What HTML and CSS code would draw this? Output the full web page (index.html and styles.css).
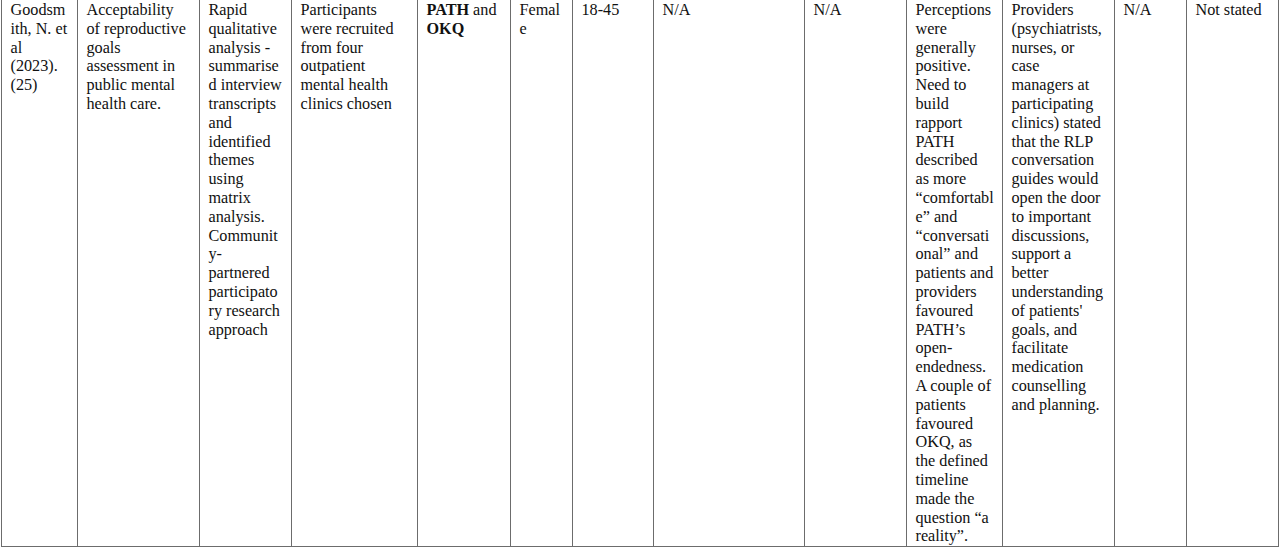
FILE: index.html
```html
<!DOCTYPE html>
<html lang="en">
<head>
<meta charset="utf-8">
<title>Study table</title>
<link rel="stylesheet" href="styles.css">
</head>
<body>
<div class="table" role="table">
  <div class="row" role="row">
    <div class="cell" role="cell">Goodsm<br>ith, N. et<br>al<br>(2023).<br>(25)</div>
    <div class="cell" role="cell">Acceptability<br>of reproductive<br>goals<br>assessment in<br>public mental<br>health care.</div>
    <div class="cell" role="cell">Rapid<br>qualitative<br>analysis -<br>summarise<br>d interview<br>transcripts<br>and<br>identified<br>themes<br>using<br>matrix<br>analysis.<br>Communit<br>y-<br>partnered<br>participato<br>ry research<br>approach</div>
    <div class="cell" role="cell">Participants<br>were recruited<br>from four<br>outpatient<br>mental health<br>clinics chosen</div>
    <div class="cell" role="cell"><b>PATH</b> and<br><b>OKQ</b></div>
    <div class="cell" role="cell">Femal<br>e</div>
    <div class="cell" role="cell">18-45</div>
    <div class="cell" role="cell">N/A</div>
    <div class="cell" role="cell">N/A</div>
    <div class="cell" role="cell">Perceptions<br>were<br>generally<br>positive.<br>Need to<br>build<br>rapport<br>PATH<br>described<br>as more<br>“comfortabl<br>e” and<br>“conversati<br>onal” and<br>patients and<br>providers<br>favoured<br>PATH’s<br>open-<br>endedness.<br>A couple of<br>patients<br>favoured<br>OKQ, as<br>the defined<br>timeline<br>made the<br>question “a<br>reality”.</div>
    <div class="cell" role="cell">Providers<br>(psychiatrists,<br>nurses, or<br>case<br>managers at<br>participating<br>clinics) stated<br>that the RLP<br>conversation<br>guides would<br>open the door<br>to important<br>discussions,<br>support a<br>better<br>understanding<br>of patients'<br>goals, and<br>facilitate<br>medication<br>counselling<br>and planning.</div>
    <div class="cell" role="cell">N/A</div>
    <div class="cell cell-last" role="cell">Not stated</div>
  </div>
</div>
</body>
</html>
```
FILE: styles.css
```css
html, body {
  margin: 0;
  padding: 0;
  background: #ffffff;
}

body {
  font-family: "Liberation Serif", "Times New Roman", serif;
  font-size: 16.2px;
  line-height: 18.8px;
  color: #111111;
}

.table {
  margin-left: 1px;
  width: 1278px;
}

.row {
  display: grid;
  grid-template-columns: 76px 122px 92px 126px 93px 62px 81px 151px 102px 96px 112px 72px 93px;
}

.cell {
  box-sizing: border-box;
  border-left: 1px solid #6c6c6c;
  border-bottom: 1px solid #6c6c6c;
  padding: 1px 2px 0 8.5px;
  white-space: nowrap;
  overflow: hidden;
}

.cell-last {
  border-right: 1px solid #6c6c6c;
}

.cell b {
  font-weight: bold;
}
```
